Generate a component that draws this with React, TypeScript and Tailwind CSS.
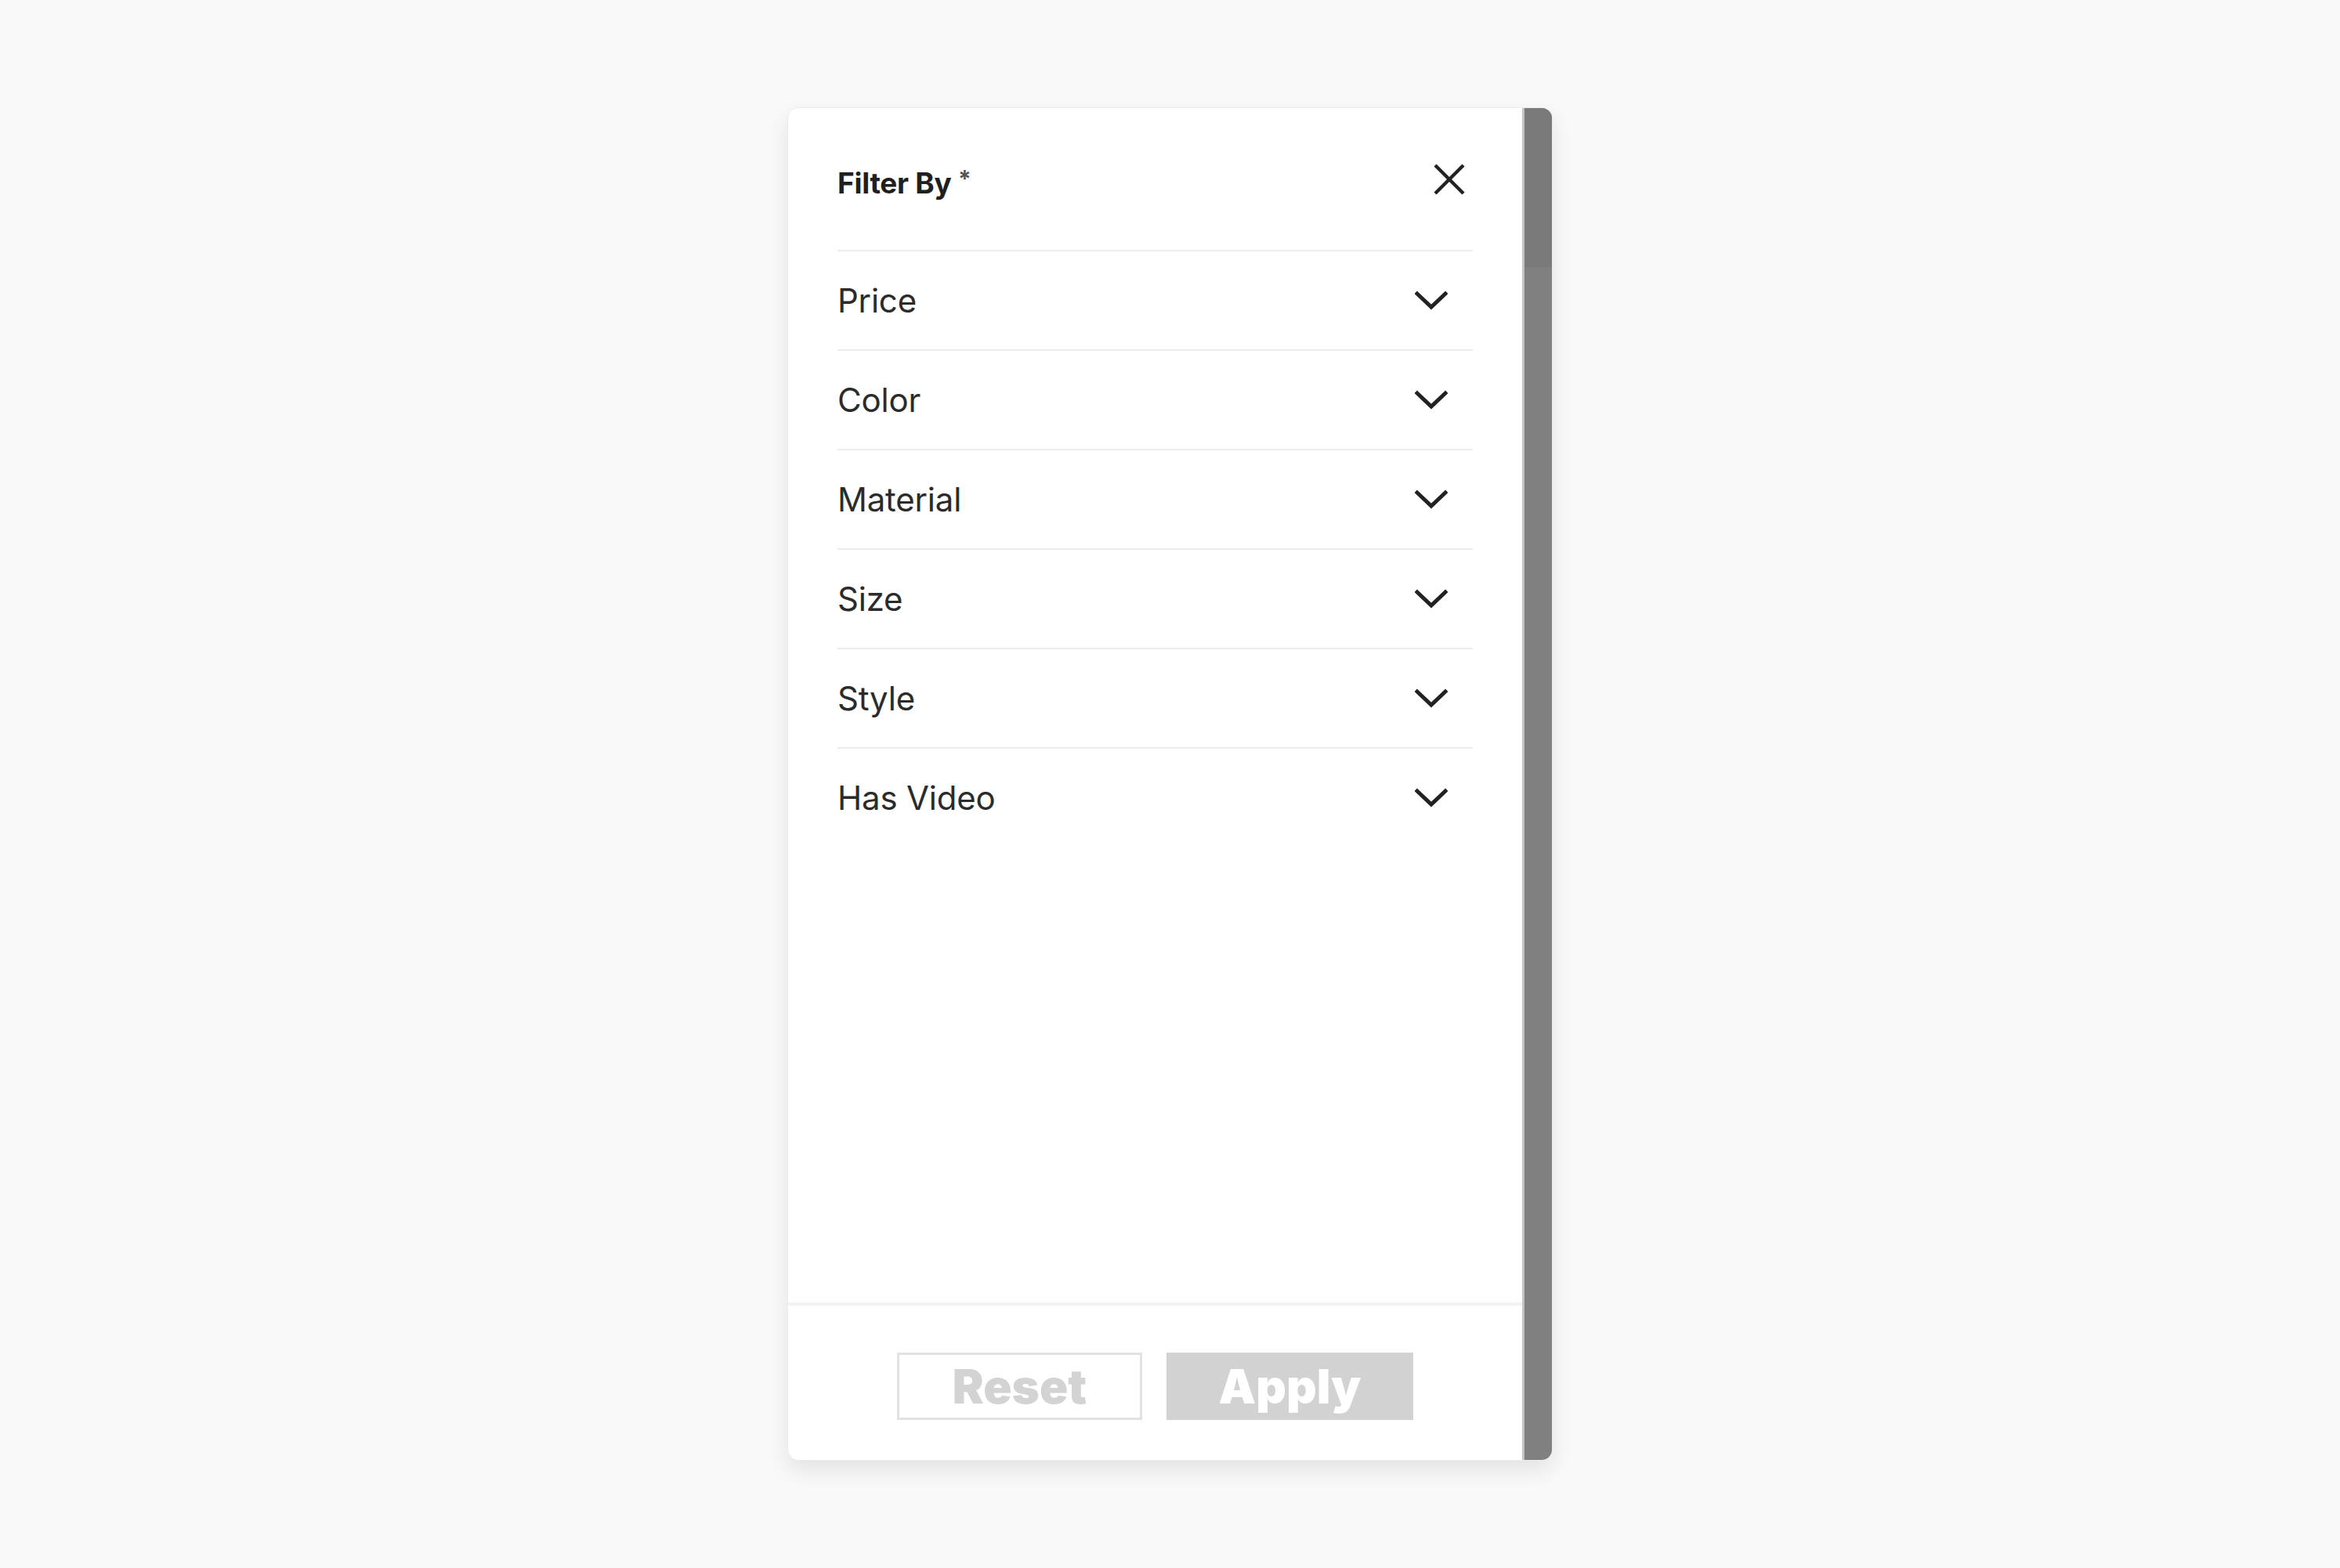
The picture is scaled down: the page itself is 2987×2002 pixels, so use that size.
import React from "react";

const filters = ["Price", "Color", "Material", "Size", "Style", "Has Video"];

const Chevron = () => (
  <svg width="42" height="26" viewBox="0 0 42 26" fill="none">
    <polyline
      points="3,4 21,21 39,4"
      stroke="#222"
      strokeWidth="5"
      strokeLinecap="square"
      strokeLinejoin="miter"
    />
  </svg>
);

const CloseIcon = () => (
  <svg width="42" height="42" viewBox="0 0 42 42" fill="none">
    <line x1="3" y1="3" x2="39" y2="39" stroke="#222" strokeWidth="4.5" />
    <line x1="39" y1="3" x2="3" y2="39" stroke="#222" strokeWidth="4.5" />
  </svg>
);

const App: React.FC = () => {
  return (
    <div
      className="min-h-screen w-full bg-[#f9f9f9] flex items-center justify-center"
      style={{ fontFamily: "Inter, 'Open Sans', sans-serif" }}
    >
      <div className="flex w-[977px] h-[1728px] bg-white rounded-[14px] overflow-hidden border border-[#ececec] shadow-[0_12px_28px_rgba(0,0,0,0.09)]">
        {/* content */}
        <div className="flex-1 flex flex-col">
          <div className="flex-1 px-[63px]">
            <div className="flex items-center justify-between h-[181px]">
              <span className="pt-[10px] text-[37px] font-bold text-[#1f1f1f] tracking-[-0.3px]">
                Filter By <span className="text-[#555] text-[30px] align-top">*</span>
              </span>
              <span className="mr-[9px]">
                <CloseIcon />
              </span>
            </div>

            {filters.map((label) => (
              <div
                key={label}
                className="flex items-center justify-between h-[127px] border-t-2 border-[#ececec]"
              >
                <span className="text-[42px] text-[#2b2b2b] tracking-[-0.2px]">
                  {label}
                </span>
                <span className="mr-[32px]">
                  <Chevron />
                </span>
              </div>
            ))}
          </div>

          {/* footer */}
          <div className="border-t-4 border-[#f2f2f2] flex justify-center gap-[31px] pt-[60px] pb-[51px]">
            <button className="w-[313px] h-[86px] border-[3px] border-[#e2e2e2] bg-white text-[#d3d3d3] text-[60px] font-black leading-none">
              Reset
            </button>
            <button className="w-[315px] h-[86px] bg-[#d2d2d2] text-white text-[60px] font-black leading-none">
              Apply
            </button>
          </div>
        </div>

        {/* scrollbar */}
        <div className="w-[38px] bg-[#808080] border-l-[3px] border-[#c4c4c4] flex flex-col">
          <div className="h-[203px] bg-[#7a7a7a]" />
        </div>
      </div>
    </div>
  );
};

export default App;
